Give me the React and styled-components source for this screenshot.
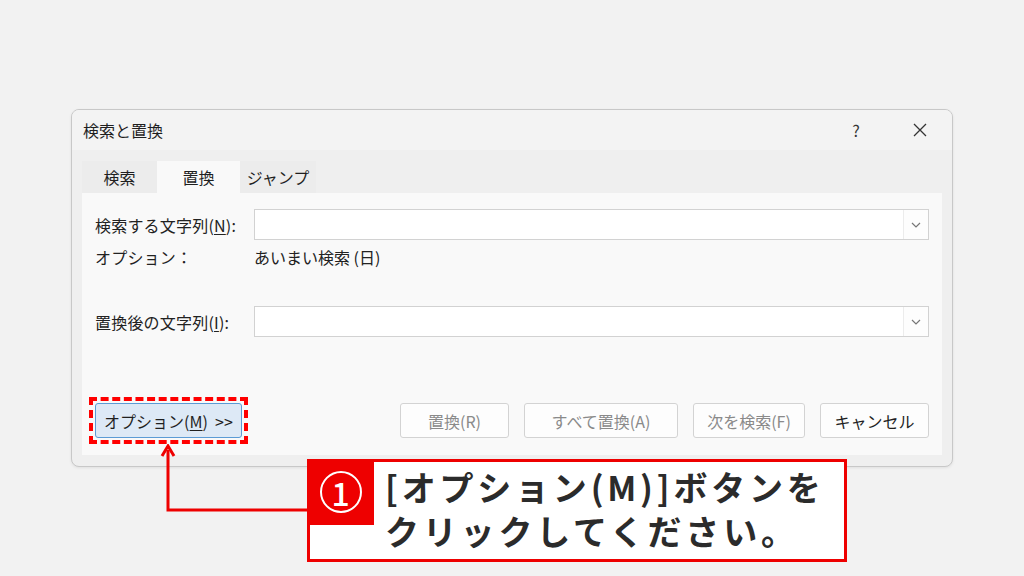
import React from 'react';
import styled, { createGlobalStyle } from 'styled-components';

const GlobalStyle = createGlobalStyle`
  html, body {
    margin: 0;
    padding: 0;
    background: #f2f2f2;
  }
  body {
    font-family: "Noto Sans CJK JP", "Noto Sans", sans-serif;
  }
`;

const Page = styled.div`
  position: relative;
  width: 1024px;
  height: 576px;
  overflow: hidden;
  padding: 109px 0 0 71px;
  box-sizing: border-box;
  background: #f2f2f2;
`;

const Dialog = styled.div`
  width: 882px;
  height: 358px;
  box-sizing: border-box;
  border: 1px solid #c8c8c8;
  border-radius: 8px;
  background: #efefef;
  display: flex;
  flex-direction: column;
  overflow: hidden;
  box-shadow: 0 1px 3px rgba(0, 0, 0, 0.08);
`;

const TitleBar = styled.div`
  height: 40px;
  display: flex;
  align-items: center;
  padding-left: 11px;
  background: #f3f3f3;
  font-size: 16px;
  color: #1f1f1f;
`;

const Title = styled.div`
  flex: 1;
`;

const TitleButton = styled.div`
  width: 64px;
  display: flex;
  justify-content: center;
  align-items: center;
  color: #333;
  font-size: 16px;
`;

const Body = styled.div`
  flex: 1;
  padding: 11px 10px 11px 10px;
  display: flex;
  flex-direction: column;
`;

const Tabs = styled.div`
  display: flex;
  height: 32px;
`;

const Tab = styled.div`
  display: flex;
  align-items: center;
  justify-content: center;
  width: ${p => p.$w}px;
  font-size: 16px;
  color: #1f1f1f;
  background: ${p => (p.$active ? '#f9f9f9' : '#ececec')};
`;

const Panel = styled.div`
  flex: 1;
  background: #f9f9f9;
  padding: 16px 13px 17px 13px;
  display: flex;
  flex-direction: column;
`;

const Row = styled.div`
  display: flex;
  align-items: center;
  height: ${p => p.$h}px;
  margin-top: ${p => p.$mt || 0}px;
  font-size: 16px;
  color: #222;
`;

const Label = styled.div`
  width: 159px;
  flex-shrink: 0;
  letter-spacing: 0.2px;
`;

const Combo = styled.div`
  flex: 1;
  height: 31px;
  box-sizing: border-box;
  border: 1px solid #d2d2d2;
  background: #fff;
  display: flex;
  justify-content: flex-end;
`;

const DropButton = styled.div`
  width: 24px;
  border-left: 1px solid #ececec;
  display: flex;
  align-items: center;
  justify-content: center;
  background: #fdfdfd;
`;

const ButtonRow = styled.div`
  margin-top: auto;
  display: flex;
  gap: 15px;
  align-items: center;
`;

const Marker = styled.div`
  margin: -6px 137px -6px -6px;
  padding: 2px;
  border: 4px dashed #ff0000;
  display: flex;
`;

const Button = styled.div`
  width: ${p => p.$w}px;
  height: 35px;
  box-sizing: border-box;
  border: 1px solid ${p => (p.$primary ? '#5b9bd5' : '#d3d3d3')};
  border-radius: 3px;
  background: ${p => (p.$primary ? '#dde9f6' : '#fdfdfd')};
  color: ${p => (p.$disabled ? '#8a8a8a' : '#1f1f1f')};
  font-size: 16px;
  display: flex;
  align-items: center;
  justify-content: center;
  white-space: pre;
`;

const Key = styled.span`
  text-decoration: underline;
  text-underline-offset: 2px;
`;

const Callout = styled.div`
  position: absolute;
  left: 307px;
  top: 459px;
  width: 540px;
  height: 103px;
  box-sizing: border-box;
  border: 3px solid #ee0000;
  background: #fff;
  display: flex;
  align-items: flex-start;
`;

const Badge = styled.div`
  width: 67px;
  height: 66px;
  margin: -3px 0 0 -3px;
  background: #ee0000;
  display: flex;
  align-items: center;
  justify-content: center;
  flex-shrink: 0;
`;

const Circle = styled.div`
  width: 42px;
  height: 42px;
  box-sizing: border-box;
  border: 2px solid #fff;
  border-radius: 50%;
  color: #fff;
  display: flex;
  align-items: center;
  justify-content: center;
  font-size: 32px;
  font-weight: 500;
  line-height: 1;
`;

const CalloutText = styled.div`
  margin: 3px 0 0 11px;
  display: flex;
  flex-direction: column;
`;

const CalloutLine = styled.div`
  height: 44px;
  font-size: 34px;
  font-weight: 700;
  line-height: 44px;
  letter-spacing: 3.8px;
  color: #2b2b2b;
  white-space: nowrap;
`;

const Arrow = styled.svg`
  position: absolute;
  left: 160px;
  top: 444px;
`;

const Chevron = () => (
  <svg width="10" height="6" viewBox="0 0 10 6">
    <path d="M1 1l4 4 4-4" fill="none" stroke="#777" strokeWidth="1.2" />
  </svg>
);

export default function App() {
  return (
    <>
      <GlobalStyle />
      <Page>
        <Dialog>
          <TitleBar>
            <Title>検索と置換</Title>
            <TitleButton>?</TitleButton>
            <TitleButton>
              <svg width="14" height="14" viewBox="0 0 14 14">
                <path d="M1 1l12 12M13 1L1 13" stroke="#333" strokeWidth="1.3" />
              </svg>
            </TitleButton>
          </TitleBar>
          <Body>
            <Tabs>
              <Tab $w={75}>検索</Tab>
              <Tab $w={83} $active>置換</Tab>
              <Tab $w={76}>ジャンプ</Tab>
            </Tabs>
            <Panel>
              <Row $h={31}>
                <Label>検索する文字列(<Key>N</Key>):</Label>
                <Combo>
                  <DropButton><Chevron /></DropButton>
                </Combo>
              </Row>
              <Row $h={18} $mt={8}>
                <Label>オプション：</Label>
                <div>あいまい検索 (日)</div>
              </Row>
              <Row $h={31} $mt={40}>
                <Label>置換後の文字列(<Key>I</Key>):</Label>
                <Combo>
                  <DropButton><Chevron /></DropButton>
                </Combo>
              </Row>
              <ButtonRow>
                <Marker>
                  <Button $w={147} $primary>オプション(<Key>M</Key>)  &gt;&gt;</Button>
                </Marker>
                <Button $w={109} $disabled>置換(R)</Button>
                <Button $w={154} $disabled>すべて置換(A)</Button>
                <Button $w={112} $disabled>次を検索(F)</Button>
                <Button $w={109}>キャンセル</Button>
              </ButtonRow>
            </Panel>
          </Body>
        </Dialog>

        <Arrow width="150" height="70" viewBox="0 0 150 70">
          <path d="M8 6V66H148" fill="none" stroke="#ee0000" strokeWidth="3" />
          <path d="M2 12L8 2L14 12" fill="none" stroke="#ee0000" strokeWidth="3" />
        </Arrow>

        <Callout>
          <Badge>
            <Circle>1</Circle>
          </Badge>
          <CalloutText>
            <CalloutLine>[オプション(M)]ボタンを</CalloutLine>
            <CalloutLine>クリックしてください。</CalloutLine>
          </CalloutText>
        </Callout>
      </Page>
    </>
  );
}
